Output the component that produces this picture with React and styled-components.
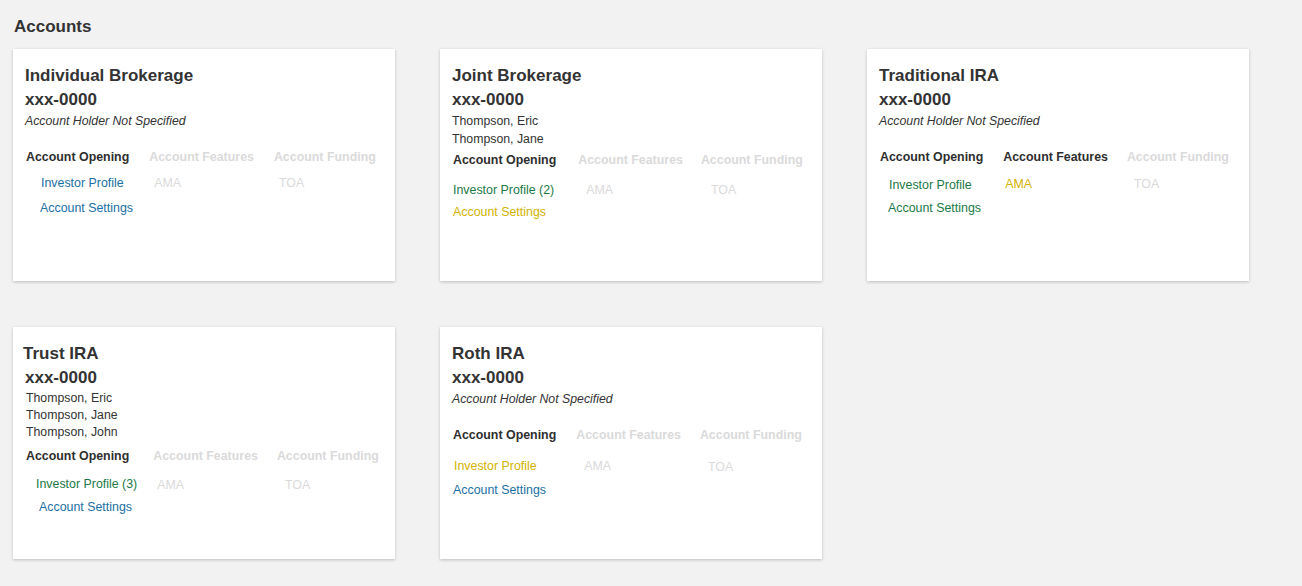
import React from "react";
import styled, { createGlobalStyle } from "styled-components";

const GlobalStyle = createGlobalStyle`
  html, body { margin: 0; padding: 0; background: #f2f2f2; }
  body { font-family: "Liberation Sans", Arial, sans-serif; color: #333; }
`;

const COLORS = {
  blue: "#1c6fa4",
  green: "#1b7a46",
  yellow: "#d2b300",
  muted: "#dadada",
  dark: "#2e2e2e",
};

const Page = styled.div`
  padding: 15px 0 0 13px;
  min-height: 571px;
`;

const Heading = styled.h1`
  margin: 0 0 10px 1px;
  font-size: 17px;
  line-height: 24px;
  font-weight: 700;
  color: #333;
`;

const Grid = styled.div`
  display: grid;
  grid-template-columns: repeat(3, 382px);
  grid-auto-rows: 232px;
  column-gap: 45px;
  row-gap: 46px;
`;

const Card = styled.section`
  background: #fff;
  box-shadow: 0 1px 3px rgba(0, 0, 0, 0.22);
  padding: 15px 12px 0 12px;
  box-sizing: border-box;
`;

const Title = styled.h2`
  margin: 0 0 0 ${(p) => p.$shift || 0}px;
  font-size: 17px;
  line-height: 24px;
  font-weight: 700;
  color: #333;
`;

const Number = styled.div`
  font-size: 17px;
  line-height: 24px;
  font-weight: 700;
  color: #333;
`;

const Holders = styled.div`
  font-size: 12.3px;
  line-height: ${(p) => p.$lh}px;
  color: #333;
  padding-left: ${(p) => p.$shift || 0}px;
`;

const Holder = styled.div`
  font-style: ${(p) => (p.$italic ? "italic" : "normal")};
`;

const Steps = styled.div`
  display: flex;
  margin: ${(p) => p.$top}px 0 0 1px;
`;

const Step = styled.div`
  display: flex;
  flex-direction: column;
  margin-left: ${(p) => p.$gap}px;
`;

const StepTitle = styled.div`
  font-size: 12.4px;
  line-height: 18px;
  font-weight: 700;
  white-space: nowrap;
  color: ${(p) => (p.$active ? COLORS.dark : COLORS.muted)};
`;

const Links = styled.div`
  display: flex;
  flex-direction: column;
  contain: inline-size;
  overflow: visible;
  padding-top: ${(p) => p.$top}px;
`;

const Link = styled.a`
  font-size: 12.4px;
  line-height: ${(p) => p.$lh}px;
  white-space: nowrap;
  text-decoration: none;
  cursor: pointer;
  padding-left: ${(p) => p.$indent || 0}px;
  color: ${(p) => COLORS[p.$color]};
`;

const cards = [
  {
    title: "Individual Brokerage",
    holders: [],
    stepsTop: 18,
    gaps: [0, 20, 20],
    top: 5,
    lh: 25,
    active: [true, false, false],
    cols: [
      [
        { label: "Investor Profile", color: "blue", indent: 15 },
        { label: "Account Settings", color: "blue", indent: 14 },
      ],
      [{ label: "AMA", color: "muted", indent: 5 }],
      [{ label: "TOA", color: "muted", indent: 5 }],
    ],
  },
  {
    title: "Joint Brokerage",
    holders: ["Thompson, Eric", "Thompson, Jane"],
    stepsTop: 3,
    gaps: [0, 22, 18],
    top: 10,
    lh: 22,
    active: [true, false, false],
    cols: [
      [
        { label: "Investor Profile (2)", color: "green", indent: 0 },
        { label: "Account Settings", color: "yellow", indent: 0 },
      ],
      [{ label: "AMA", color: "muted", indent: 8 }],
      [{ label: "TOA", color: "muted", indent: 10 }],
    ],
  },
  {
    title: "Traditional IRA",
    holders: [],
    stepsTop: 18,
    gaps: [0, 20, 19],
    top: 8,
    lh: 23,
    active: [true, true, false],
    cols: [
      [
        { label: "Investor Profile", color: "green", indent: 9 },
        { label: "Account Settings", color: "green", indent: 8 },
      ],
      [{ label: "AMA", color: "yellow", indent: 2, offset: -1 }],
      [{ label: "TOA", color: "muted", indent: 7, offset: -1 }],
    ],
  },
  {
    title: "Trust IRA",
    titleShift: -2,
    holders: ["Thompson, Eric", "Thompson, Jane", "Thompson, John"],
    holderShift: 1,
    holderLh: 17,
    stepsTop: 6,
    gaps: [0, 24, 19],
    top: 8,
    lh: 23,
    active: [true, false, false],
    cols: [
      [
        { label: "Investor Profile (3)", color: "green", indent: 10 },
        { label: "Account Settings", color: "blue", indent: 13 },
      ],
      [{ label: "AMA", color: "muted", indent: 4, offset: 1 }],
      [{ label: "TOA", color: "muted", indent: 8, offset: 1 }],
    ],
  },
  {
    title: "Roth IRA",
    holders: [],
    stepsTop: 18,
    gaps: [0, 20, 19],
    top: 10,
    lh: 24,
    active: [true, false, false],
    cols: [
      [
        { label: "Investor Profile", color: "yellow", indent: 1 },
        { label: "Account Settings", color: "blue", indent: 0 },
      ],
      [{ label: "AMA", color: "muted", indent: 8 }],
      [{ label: "TOA", color: "muted", indent: 8, offset: 1 }],
    ],
  },
];

const stepNames = ["Account Opening", "Account Features", "Account Funding"];

function AccountCard({ card }) {
  return (
    <Card>
      <Title $shift={card.titleShift}>{card.title}</Title>
      <Number>xxx-0000</Number>
      <Holders $lh={card.holderLh || 18} $shift={card.holderShift}>
        {card.holders.length === 0 ? (
          <Holder $italic>Account Holder Not Specified</Holder>
        ) : (
          card.holders.map((h) => <Holder key={h}>{h}</Holder>)
        )}
      </Holders>
      <Steps $top={card.stepsTop}>
        {stepNames.map((name, i) => (
          <Step key={name} $gap={card.gaps[i]}>
            <StepTitle $active={card.active[i]}>{name}</StepTitle>
            <Links $top={card.top + (card.cols[i][0].offset || 0)}>
              {card.cols[i].map((l) => (
                <Link key={l.label} $color={l.color} $indent={l.indent} $lh={card.lh}>
                  {l.label}
                </Link>
              ))}
            </Links>
          </Step>
        ))}
      </Steps>
    </Card>
  );
}

export default function App() {
  return (
    <>
      <GlobalStyle />
      <Page>
        <Heading>Accounts</Heading>
        <Grid>
          {cards.map((c) => (
            <AccountCard key={c.title} card={c} />
          ))}
        </Grid>
      </Page>
    </>
  );
}
